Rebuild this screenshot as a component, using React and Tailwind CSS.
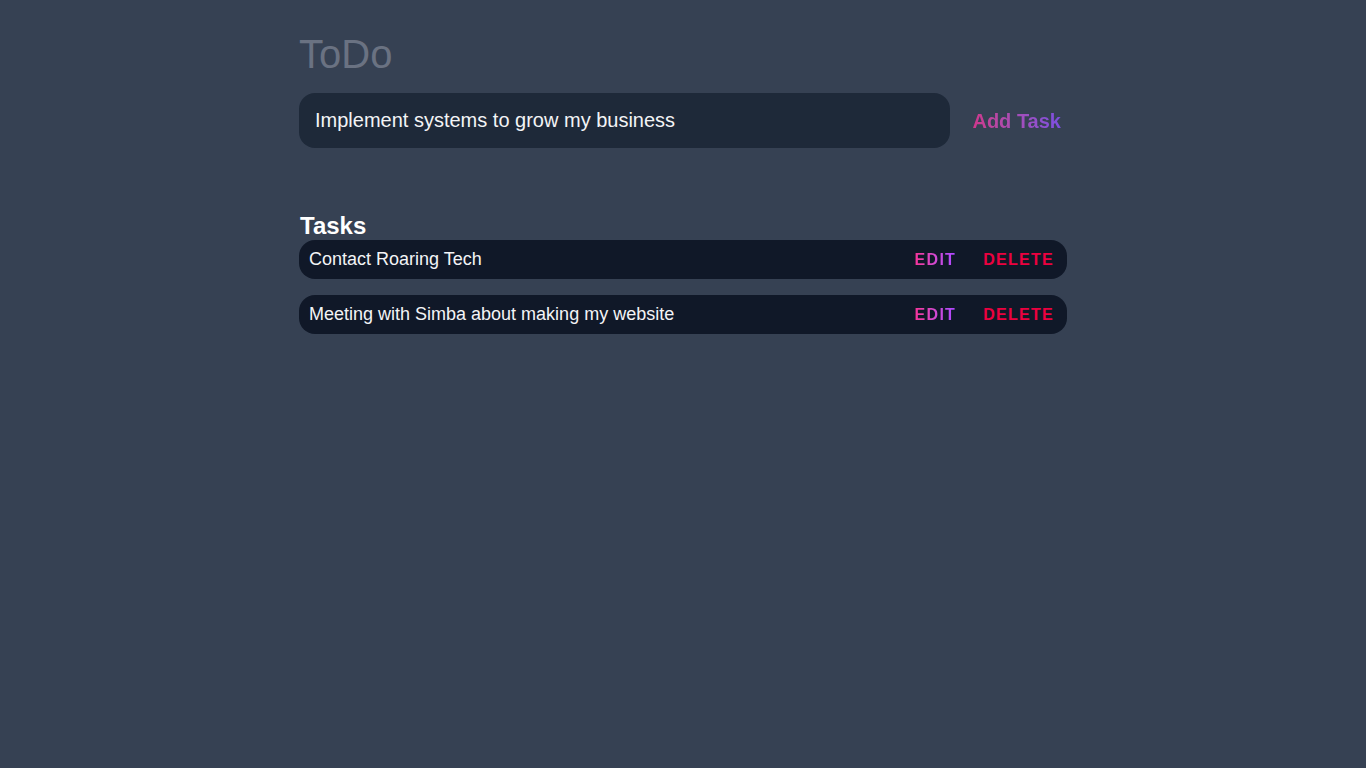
import { useEffect, useRef, useState } from 'react'

const tasks = ['Contact Roaring Tech', 'Meeting with Simba about making my website']

export default function App() {
    const [value, setValue] = useState('Implement systems to grow my business')
    const inputRef = useRef(null)

    // keep the caret at the end of the draft, like the screenshot
    useEffect(() => {
        const el = inputRef.current
        if (!el) return
        el.focus()
        el.setSelectionRange(el.value.length, el.value.length)
    }, [])

    return (
        <div className="min-h-screen bg-gray-700 font-['Liberation_Sans',Arial,sans-serif]">
            <div className="mx-auto max-w-3xl pt-[30px]">
                <h1 className="text-[40px] leading-[48px] text-gray-500">ToDo</h1>
                <div className="mt-[15px] flex items-center">
                    <input
                        ref={inputRef}
                        className="h-[55px] w-[651px] rounded-2xl bg-gray-800 px-4 text-[20px] text-gray-100 caret-gray-100 outline-none"
                        value={value}
                        onChange={(e) => setValue(e.target.value)}
                    />
                    <button className="ml-auto mr-[6px] bg-gradient-to-r from-pink-500 to-violet-500 bg-clip-text text-[20px] font-bold text-transparent opacity-80">
                        Add Task
                    </button>
                </div>

                <h2 className="mt-[63px] pl-px text-[24px] font-bold leading-[29px] text-white">Tasks</h2>
                <div className="flex flex-col gap-4">
                    {tasks.map((task) => (
                        <div key={task} className="flex h-[39px] items-center rounded-2xl bg-gray-900 pl-[10px] pr-[13px]">
                            <span className="text-[18px] text-gray-100">{task}</span>
                            <button className="ml-auto bg-gradient-to-r from-pink-500 to-purple-500 bg-clip-text text-[16px] font-bold tracking-[0.08em] text-transparent">
                                EDIT
                            </button>
                            <button className="ml-[27px] text-[16px] font-bold tracking-[0.08em] text-rose-600">
                                DELETE
                            </button>
                        </div>
                    ))}
                </div>
            </div>
        </div>
    )
}
